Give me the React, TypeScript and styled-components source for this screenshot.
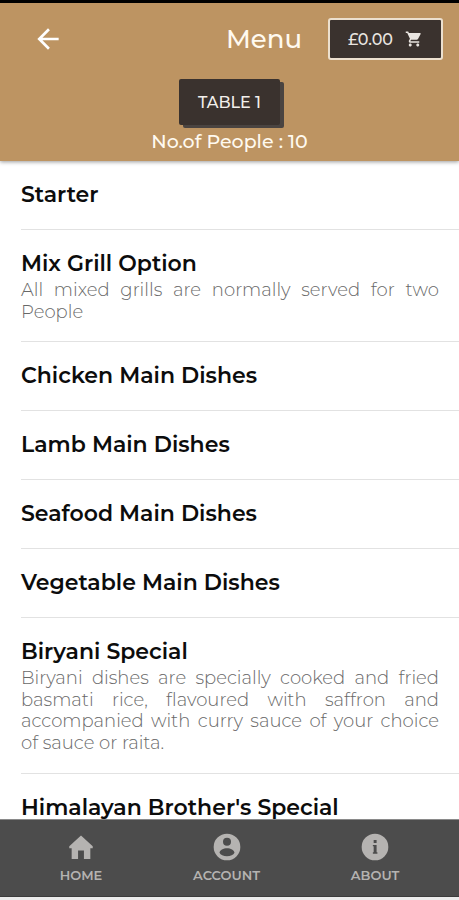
import React from "react";
import styled, { createGlobalStyle } from "styled-components";
import { MdArrowBack } from "react-icons/md";

const GlobalStyle = createGlobalStyle`
  *, *::before, *::after { box-sizing: border-box; }
  body {
    margin: 0;
    background: #fff;
    font-family: Montserrat, Inter, "Open Sans", sans-serif;
    color: #0c0c0c;
  }
  button { font-family: inherit; cursor: pointer; }
`;

const Screen = styled.div`
  display: flex;
  flex-direction: column;
  height: 100vh;
  border-top: 3px solid #000;
  border-bottom: 3px solid #ececec;
`;

const Header = styled.header`
  flex: none;
  z-index: 1;
  padding: 15px 16px 7px;
  background: #bd9462;
  color: #fffaf0;
  box-shadow: 0 1px 4px rgba(0, 0, 0, 0.4);
`;

const Toolbar = styled.div`
  display: flex;
  align-items: center;
  padding-left: 16px;
`;

const BackButton = styled.button`
  display: flex;
  padding: 0;
  border: 0;
  background: none;
  color: #fff;
`;

const Title = styled.h1`
  flex: 1;
  margin: 0 26px 0 0;
  text-align: right;
  font-size: 26px;
  line-height: 32px;
  font-weight: 500;
`;

const CartButton = styled.button`
  display: flex;
  align-items: center;
  justify-content: center;
  gap: 12px;
  width: 115px;
  height: 42px;
  padding: 0;
  border: 2px solid #ece0cf;
  border-radius: 3px;
  background: #3a322e;
  color: #e9e5e0;
  font-size: 16px;
  font-weight: 500;
`;

const TableInfo = styled.div`
  display: flex;
  flex-direction: column;
  align-items: center;
  padding-top: 19px;
`;

const TableButton = styled.button`
  height: 46px;
  padding: 0 19px;
  border: 0;
  border-radius: 2px;
  background: #3a322e;
  box-shadow: 4px 3px 0 #4a4441;
  color: #f3f0ec;
  font-size: 16px;
  font-weight: 500;
`;

const People = styled.p`
  margin: 5px 0 0;
  font-size: 19px;
  line-height: 24px;
  font-weight: 500;
`;

const MenuList = styled.ul`
  flex: 1;
  min-height: 0;
  overflow: hidden;
  margin: 0;
  padding: 0 0 0 21px;
  list-style: none;
`;

const MenuItem = styled.li<{ $described: boolean }>`
  padding: 20px 20px ${(p) => (p.$described ? 18 : 20)}px 0;
  border-bottom: 1px solid #e2e2e2;
`;

const ItemTitle = styled.h2`
  margin: 0;
  font-size: 22px;
  line-height: 28px;
  font-weight: 600;
`;

const Description = styled.p`
  margin: 2px 0 0;
  color: #686868;
  font-size: 18px;
  line-height: 1.2;
  font-weight: 300;
  text-align: justify;
`;

const BottomNav = styled.nav`
  flex: none;
  display: flex;
  justify-content: space-between;
  padding: 11px 13% 11px;
  border-top: 1px solid #8a8a8a;
  border-bottom: 1px solid #3c3c3c;
  background: #4c4c4c;
`;

const NavButton = styled.button`
  display: flex;
  flex-direction: column;
  align-items: center;
  gap: 2px;
  padding: 0;
  border: 0;
  background: none;
  color: #b5b3b1;
  font-size: 13px;
  line-height: 20px;
  font-weight: 600;
`;

const dishes: { title: string; description?: string }[] = [
  { title: "Starter" },
  {
    title: "Mix Grill Option",
    description: "All mixed grills are normally served for two People",
  },
  { title: "Chicken Main Dishes" },
  { title: "Lamb Main Dishes" },
  { title: "Seafood Main Dishes" },
  { title: "Vegetable Main Dishes" },
  {
    title: "Biryani Special",
    description:
      "Biryani dishes are specially cooked and fried basmati rice, flavoured with saffron and accompanied with curry sauce of your choice of sauce or raita.",
  },
  { title: "Himalayan Brother's Special" },
];

const tabs = [
  { label: "HOME", path: "M12 3.3 20.8 11.4V13H19V21H14.2V14.6H9.8V21H5V13H3.2V11.4Z" },
  {
    label: "ACCOUNT",
    path: "M12 2a10 10 0 1 0 0 20 10 10 0 0 0 0-20zm0 3a3 3 0 1 1 0 6 3 3 0 0 1 0-6zm0 14c-2.7 0-4.9-1-5.6-2.6 0-2 3-3.500 5.600-3.500s5.600 1.500 5.600 3.500C16.900 18 14.700 19 12 19z",
  },
  {
    label: "ABOUT",
    path: "M12 2a10 10 0 1 0 0 20 10 10 0 0 0 0-20zm-1 4.800h2.200v2.200h-2.200zm-.6 3.700h2.800v5.500h.6v1h-3.400v-1h.6v-4.500h-.6z",
  },
];

function CartIcon() {
  return (
    <svg width="18" height="18" viewBox="0 0 24 24" fill="currentColor" aria-hidden="true">
      <path d="M7 18c-1.100 0-1.990.9-1.990 2S5.900 22 7 22s2-.9 2-2-.9-2-2-2zM1 2v2h2l3.600 7.590-1.350 2.450c-.16.28-.25.61-.25.96 0 1.100.9 2 2 2h12v-2H7.420c-.14 0-.25-.11-.25-.25l.03-.12.9-1.630h7.450c.75 0 1.410-.41 1.750-1.030l3.580-6.490c.08-.14.12-.31.12-.48 0-.55-.45-1-1-1H5.210l-.94-2H1zm16 16c-1.100 0-1.990.9-1.990 2s.89 2 1.990 2 2-.9 2-2-.9-2-2-2z" />
    </svg>
  );
}

export default function App() {
  return (
    <>
      <GlobalStyle />
      <Screen>
        <Header>
          <Toolbar>
            <BackButton aria-label="Back">
              <MdArrowBack size={32} />
            </BackButton>
            <Title>Menu</Title>
            <CartButton>
              £0.00
              <CartIcon />
            </CartButton>
          </Toolbar>
          <TableInfo>
            <TableButton>TABLE 1</TableButton>
            <People>No.of People : 10</People>
          </TableInfo>
        </Header>
        <MenuList>
          {dishes.map((dish) => (
            <MenuItem key={dish.title} $described={Boolean(dish.description)}>
              <ItemTitle>{dish.title}</ItemTitle>
              {dish.description && <Description>{dish.description}</Description>}
            </MenuItem>
          ))}
        </MenuList>
        <BottomNav>
          {tabs.map((tab) => (
            <NavButton key={tab.label}>
              <svg width="32" height="32" viewBox="0 0 24 24" fill="currentColor" fillRule="evenodd" aria-hidden="true">
                <path d={tab.path} />
              </svg>
              {tab.label}
            </NavButton>
          ))}
        </BottomNav>
      </Screen>
    </>
  );
}
